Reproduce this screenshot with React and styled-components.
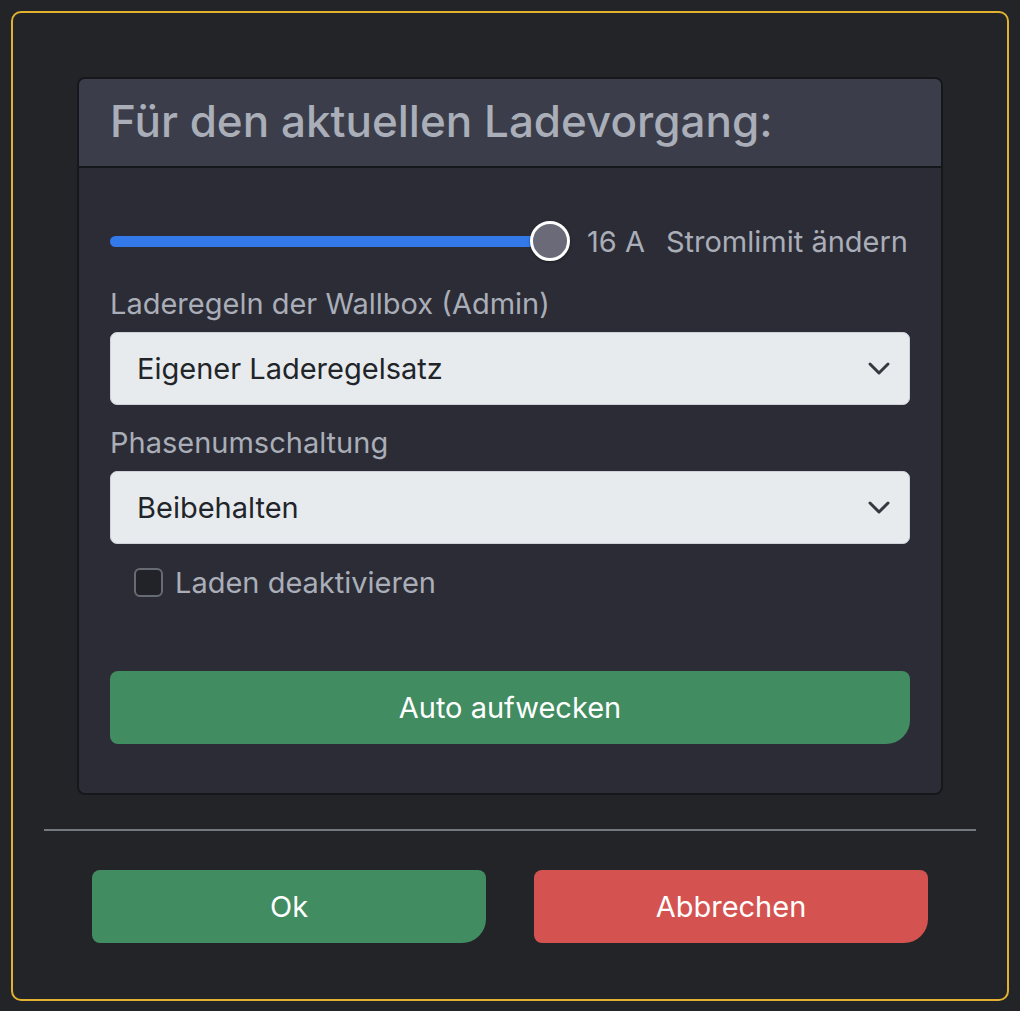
import React from "react";
import styled, { createGlobalStyle } from "styled-components";

const Global = createGlobalStyle`
  html, body { margin: 0; padding: 0; background: #222428; }
  body { font-family: Inter, "Noto Sans", "Liberation Sans", sans-serif; }
  * { box-sizing: border-box; }
`;

const Frame = styled.div`
  margin: 11px;
  height: 990px;
  border: 2px solid #e1b12f;
  border-radius: 10px;
  background: #222428;
  padding: 64px 31px 0;
  display: flex;
  flex-direction: column;
`;

const Card = styled.div`
  margin: 0 33px;
  border: 2px solid #16171b;
  border-radius: 8px;
  background: #2c2c36;
  overflow: hidden;
`;

const CardHeader = styled.div`
  background: #3b3d4a;
  border-bottom: 2px solid #16171b;
  height: 89px;
  padding: 0 31px 2px;
  display: flex;
  align-items: center;
`;

const Title = styled.h3`
  margin: 0;
  font-size: 44px;
  line-height: 1.2;
  font-weight: 500;
  color: #a9aeb8;
`;

const CardBody = styled.div`
  padding: 52px 31px 49px;
  display: flex;
  flex-direction: column;
`;

const SliderRow = styled.div`
  display: flex;
  align-items: center;
  height: 42px;
  gap: 17px;
  font-size: 29px;
  color: #a9aeb8;
`;

const SliderWrap = styled.div`
  position: relative;
  width: 460px;
  height: 42px;
  display: flex;
  align-items: center;
`;

const Track = styled.div`
  width: 440px;
  height: 11px;
  border-radius: 6px;
  background: #3479ea;
`;

const Thumb = styled.div`
  position: absolute;
  right: 0;
  top: 1px;
  width: 40px;
  height: 40px;
  border-radius: 50%;
  background: #6a6a78;
  border: 3.5px solid #ffffff;
  box-shadow: 0 1px 3px rgba(0, 0, 0, 0.4);
`;

const Value = styled.span`
  white-space: nowrap;
  margin-right: 4px;
`;

const Label = styled.label`
  display: block;
  font-size: 29px;
  line-height: 42px;
  color: #a9aeb8;
  margin-top: ${(p) => p.$top}px;
  margin-bottom: 7px;
`;

const Select = styled.div`
  height: 73px;
  border: 1px solid #cdd2d8;
  border-radius: 7px;
  background: #e8ebee;
  display: flex;
  align-items: center;
  justify-content: space-between;
  padding: 0 18px 0 26px;
  font-size: 29px;
  color: #212529;
`;

const Chevron = () => (
  <svg width="24" height="24" viewBox="0 0 24 24" fill="none">
    <polyline points="3,7 12,16 21,7" stroke="#343a40" strokeWidth="3" strokeLinecap="round" strokeLinejoin="round" />
  </svg>
);

const CheckRow = styled.label`
  display: flex;
  align-items: center;
  gap: 12px;
  margin-top: 17px;
  padding-left: 24px;
  height: 42px;
  font-size: 29px;
  color: #a9aeb8;
`;

const Box = styled.span`
  width: 29px;
  height: 29px;
  border: 2px solid #676b73;
  border-radius: 6px;
  background: #212328;
`;

const Button = styled.button`
  border: none;
  height: 73px;
  border-radius: 8px 8px 24px 8px;
  background: ${(p) => (p.$variant === "danger" ? "#d45350" : "#428c62")};
  color: #ffffff;
  font-family: inherit;
  font-size: 29px;
  font-weight: 400;
  cursor: pointer;
`;

const WideButton = styled(Button)`
  width: 100%;
  margin-top: 68px;
`;

const Divider = styled.hr`
  margin: 34px 0 0;
  border: none;
  height: 2px;
  background: #747980;
`;

const Footer = styled.div`
  display: flex;
  gap: 48px;
  padding: 39px 48px 0;
`;

const FooterButton = styled(Button)`
  flex: 1;
`;

export default function App() {
  return (
    <>
      <Global />
      <Frame>
        <Card>
          <CardHeader>
            <Title>Für den aktuellen Ladevorgang:</Title>
          </CardHeader>
          <CardBody>
            <SliderRow>
              <SliderWrap>
                <Track />
                <Thumb />
              </SliderWrap>
              <Value>16 A</Value>
              <span>Stromlimit ändern</span>
            </SliderRow>
            <Label $top={21}>Laderegeln der Wallbox (Admin)</Label>
            <Select>
              <span>Eigener Laderegelsatz</span>
              <Chevron />
            </Select>
            <Label $top={17}>Phasenumschaltung</Label>
            <Select>
              <span>Beibehalten</span>
              <Chevron />
            </Select>
            <CheckRow>
              <Box />
              Laden deaktivieren
            </CheckRow>
            <WideButton>Auto aufwecken</WideButton>
          </CardBody>
        </Card>
        <Divider />
        <Footer>
          <FooterButton>Ok</FooterButton>
          <FooterButton $variant="danger">Abbrechen</FooterButton>
        </Footer>
      </Frame>
    </>
  );
}
